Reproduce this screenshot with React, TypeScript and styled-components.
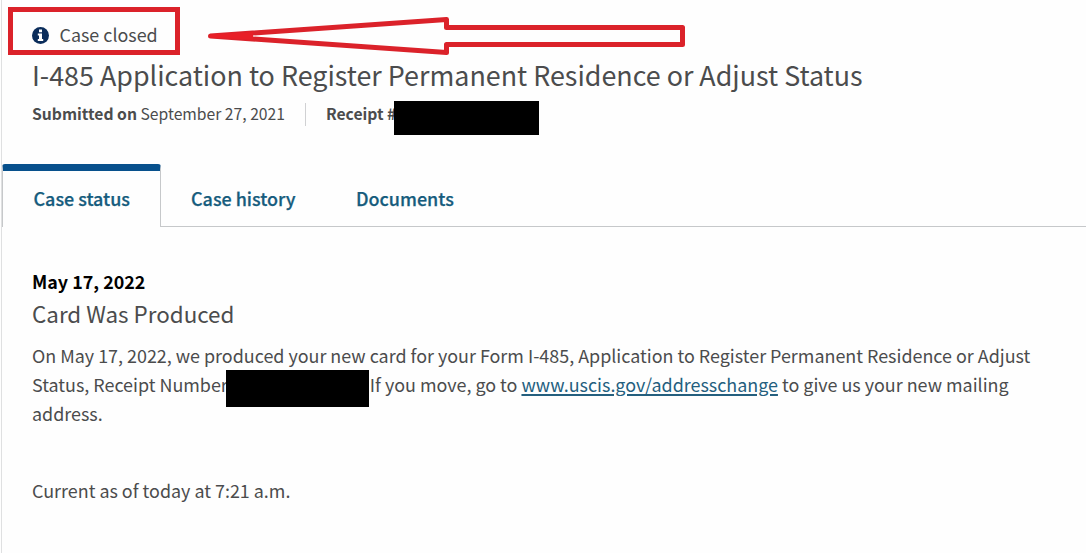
import React from 'react';
import styled, { createGlobalStyle, css } from 'styled-components';


const GlobalStyle = createGlobalStyle`
  * {
    box-sizing: border-box;
  }

  body {
    margin: 0;
    background: #fefefe;
    color: #4b4c4d;
    font-family: "Noto Sans CJK SC", "Noto Sans", sans-serif;
    overflow: hidden;
  }
`;


const Page = styled.main`
  position: relative;
  width: 1086px;
  height: 553px;
  padding-left: 2px;
  background: linear-gradient(to right, #fefefe 1px, #dfe0e1 1px, #dfe0e1 2px, #fefefe 2px);
`;


const Header = styled.header`
  height: 164px;
  padding: 19px 0 0 30px;
`;


const CaseState = styled.div`
  display: flex;
  align-items: center;
  height: 30px;
  gap: 10.5px;
  font-size: 17.9px;
  line-height: 30px;

  svg {
    margin-top: 2px;
  }
`;


const Title = styled.h1`
  margin: 6px 0 0;
  font-size: 26.86px;
  font-weight: 400;
  line-height: 40px;
  white-space: nowrap;
`;


const Meta = styled.div`
  display: flex;
  align-items: center;
  height: 26px;
  margin-top: 6px;
  font-size: 15.7px;
  line-height: 26px;
  white-space: nowrap;
`;


const MetaDivider = styled.span`
  width: 1px;
  height: 23px;
  margin: 0 20px;
  background: #d0d1d3;
`;


const Redaction = styled.span<{ $width: number; $height: number }>`
  display: inline-block;
  flex: none;
  width: ${p => p.$width}px;
  height: ${p => p.$height}px;
  background: #000;
`;


const ReceiptRedaction = styled(Redaction)`
  margin: 7px 0 0 -2px;
`;


const NumberRedaction = styled(Redaction)`
  position: relative;
  top: 1px;
  margin: -8px 1px -8px -2px;
  vertical-align: middle;
`;


const Tabs = styled.nav`
  display: flex;
  height: 63px;
`;


const activeTab = css`
  width: 159px;
  padding-left: 30.5px;
  border: 1px solid #c6c8ca;
  border-top: 7px solid #07508c;
  border-bottom: none;
  border-radius: 3px 3px 0 0;
`;


const idleTab = css`
  padding-top: 7px;
  border-bottom: 1px solid #c6c8ca;
`;


const Tab = styled.a<{ $active?: boolean; $width?: number }>`
  width: ${p => p.$width}px;
  padding-left: 30px;
  color: #165c7d;
  font-size: 17.95px;
  font-weight: 500;
  line-height: 54px;
  white-space: nowrap;
  -webkit-text-stroke: 0.25px #165c7d;
  ${p => p.$active ? activeTab : idleTab}
`;


const TabRule = styled.div`
  flex: 1;
  border-bottom: 1px solid #c6c8ca;
`;


const Panel = styled.section`
  padding: 40px 0 0 30px;
`;


const StatusDate = styled.div`
  color: #000;
  font-size: 17.9px;
  font-weight: 700;
  line-height: 28px;
`;


const StatusTitle = styled.h2`
  margin: 1px 0 0;
  font-size: 22.4px;
  font-weight: 400;
  line-height: 34px;
`;


const Copy = styled.p`
  margin: 11px 0 0;
  font-size: 17.91px;
  line-height: 29px;
  white-space: nowrap;
`;


const CopyLink = styled.a`
  color: #245f7e;
  text-decoration: underline;
  text-decoration-thickness: 1.5px;
  text-underline-offset: 2px;
`;


const CurrentAsOf = styled(Copy)`
  margin-top: 48px;
`;


const Highlight = styled.div`
  position: absolute;
  top: 7px;
  left: 8px;
  width: 172px;
  height: 48px;
  border: 5px solid #db222a;
`;


const Arrow = styled.svg`
  position: absolute;
  top: 10px;
  left: 200px;
`;


const InfoIcon = () => (
  <svg width="17" height="17" viewBox="0 0 17 17">
    <circle cx="8.5" cy="8.5" r="8.5" fill="#0b2d5b" />
    <path d="M7 2.5h3v2.7H7z M5.8 6.6h4.2v5.5h1.2v2H5.8v-2H7V8.5H5.8z" fill="#fff" />
  </svg>
);


const App: React.FC = function () {
  return (
    <Page>
      <GlobalStyle />
      <Header>
        <CaseState>
          <InfoIcon />
          <span>Case closed</span>
        </CaseState>
        <Title>I-485 Application to Register Permanent Residence or Adjust Status</Title>
        <Meta>
          <span><b>Submitted on</b> September 27, 2021</span>
          <MetaDivider />
          <b>Receipt #</b>
          <ReceiptRedaction $width={145} $height={34} />
        </Meta>
      </Header>

      <Tabs>
        <Tab $active>Case status</Tab>
        <Tab $width={165}>Case history</Tab>
        <Tab $width={160}>Documents</Tab>
        <TabRule />
      </Tabs>

      <Panel>
        <StatusDate>May 17, 2022</StatusDate>
        <StatusTitle>Card Was Produced</StatusTitle>
        <Copy>
          On May 17, 2022, we produced your new card for your Form I-485, Application to Register Permanent Residence or Adjust
          <br />
          Status, Receipt Number<NumberRedaction $width={143} $height={37} />If you move, go to <CopyLink>www.uscis.gov/addresschange</CopyLink> to give us your new mailing
          <br />
          address.
        </Copy>
        <CurrentAsOf>Current as of today at 7:21 a.m.</CurrentAsOf>
      </Panel>

      <Highlight />
      <Arrow width="490" height="50" viewBox="0 0 490 50">
        <path
          d="M10.5 26 L246.5 9.5 V17.5 H482.5 V34.5 H246.5 V42.5 Z"
          fill="none"
          stroke="#db222a"
          strokeWidth="5"
          strokeLinejoin="round"
        />
        {/* solid tip */}
        <path d="M10 24.5 L53 22 V30 L10 27.5 Z" fill="#e81f27" />
      </Arrow>
    </Page>
  );
};


export default App;
